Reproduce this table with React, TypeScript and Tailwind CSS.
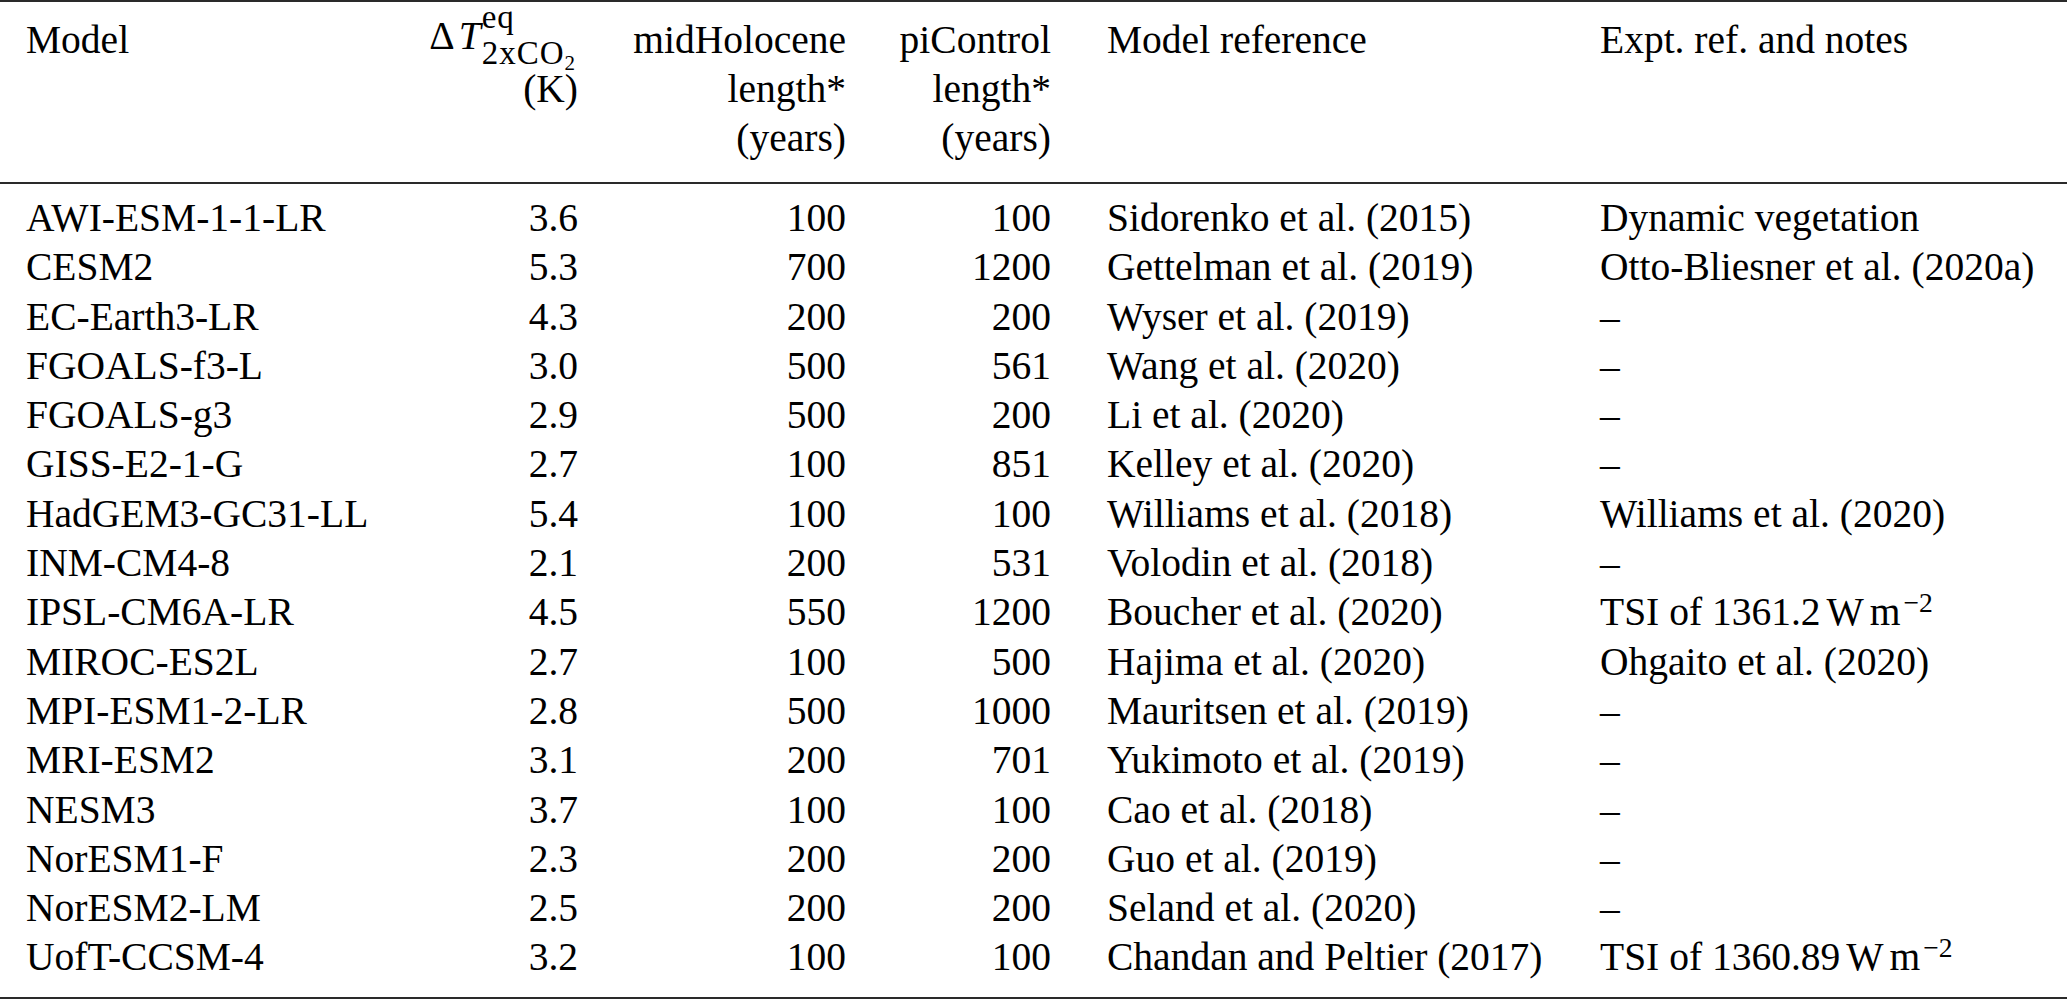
import React from "react";

type Row = [string, string, string, string, string, React.ReactNode];

const Tsi = ({ v }: { v: string }) => (
  <span>
    TSI of {v}
    <span className="ml-[6px]">W</span>
    <span className="ml-[6px]">m</span>
    <span className="ml-[3px] text-[27.6px] leading-none align-[13px]">−2</span>
  </span>
);

const rows: Row[] = [
  ["AWI-ESM-1-1-LR", "3.6", "100", "100", "Sidorenko et al. (2015)", "Dynamic vegetation"],
  ["CESM2", "5.3", "700", "1200", "Gettelman et al. (2019)", "Otto-Bliesner et al. (2020a)"],
  ["EC-Earth3-LR", "4.3", "200", "200", "Wyser et al. (2019)", "–"],
  ["FGOALS-f3-L", "3.0", "500", "561", "Wang et al. (2020)", "–"],
  ["FGOALS-g3", "2.9", "500", "200", "Li et al. (2020)", "–"],
  ["GISS-E2-1-G", "2.7", "100", "851", "Kelley et al. (2020)", "–"],
  ["HadGEM3-GC31-LL", "5.4", "100", "100", "Williams et al. (2018)", "Williams et al. (2020)"],
  ["INM-CM4-8", "2.1", "200", "531", "Volodin et al. (2018)", "–"],
  ["IPSL-CM6A-LR", "4.5", "550", "1200", "Boucher et al. (2020)", <Tsi v="1361.2" />],
  ["MIROC-ES2L", "2.7", "100", "500", "Hajima et al. (2020)", "Ohgaito et al. (2020)"],
  ["MPI-ESM1-2-LR", "2.8", "500", "1000", "Mauritsen et al. (2019)", "–"],
  ["MRI-ESM2", "3.1", "200", "701", "Yukimoto et al. (2019)", "–"],
  ["NESM3", "3.7", "100", "100", "Cao et al. (2018)", "–"],
  ["NorESM1-F", "2.3", "200", "200", "Guo et al. (2019)", "–"],
  ["NorESM2-LM", "2.5", "200", "200", "Seland et al. (2020)", "–"],
  ["UofT-CCSM-4", "3.2", "100", "100", "Chandan and Peltier (2017)", <Tsi v="1360.89" />],
];

const grid = "grid grid-cols-[374px_178px_268px_205px_549px_1fr] pl-[26px]";

export default function App() {
  return (
    <div className="w-[2067px] h-[1000px] bg-white text-black font-['Liberation_Serif','Times_New_Roman',serif] text-[39.5px] flex flex-col">
      <div className="h-[2px] bg-[#2a2a2a]" />
      <div className={`${grid} h-[180px] pt-[14px] leading-[49.2px]`}>
        <div>Model</div>
        <div className="text-right">
          <div className="-mt-[16px] h-[65px] whitespace-nowrap">
            <span>Δ</span>
            <span className="italic ml-[4px]">T</span>
            <span className="inline-block align-[-15px] text-[33px] text-left ml-[1px] pr-[3px]">
              <span className="block leading-[34px] tracking-[1px]">eq</span>
              <span className="block leading-[38px]">
                <span className="tracking-[1px]">2xCO</span>
                <span className="text-[21px] align-[-6px] leading-none">2</span>
              </span>
            </span>
          </div>
          <div>(K)</div>
        </div>
        <div className="text-right">
          <div>midHolocene</div>
          <div>length*</div>
          <div>(years)</div>
        </div>
        <div className="text-right">
          <div>piControl</div>
          <div>length*</div>
          <div>(years)</div>
        </div>
        <div className="pl-[56px]">Model reference</div>
        <div>Expt. ref. and notes</div>
      </div>
      <div className="h-[2px] bg-[#2a2a2a]" />
      <div className="pt-[10px] flex-1">
        {rows.map((r, i) => (
          <div key={i} className={`${grid} h-[49.3px] leading-[49.3px] whitespace-nowrap`}>
            <div>{r[0]}</div>
            <div className="text-right">{r[1]}</div>
            <div className="text-right">{r[2]}</div>
            <div className="text-right">{r[3]}</div>
            <div className="pl-[56px]">{r[4]}</div>
            <div>{r[5]}</div>
          </div>
        ))}
      </div>
      <div className="h-[2px] bg-[#2a2a2a] mb-[1px]" />
    </div>
  );
}
